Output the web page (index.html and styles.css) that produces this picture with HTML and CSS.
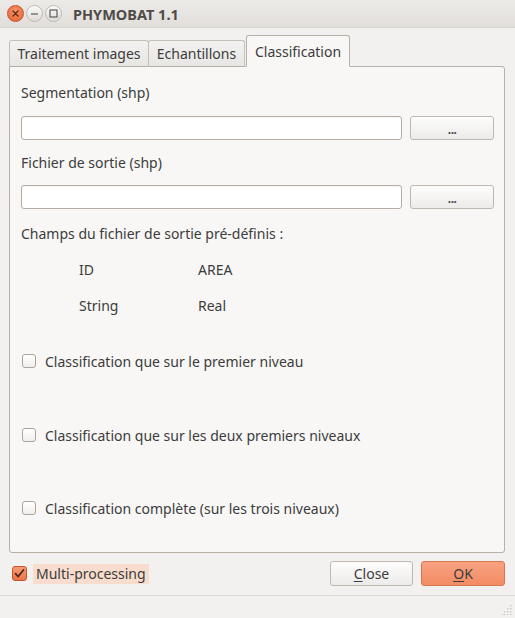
FILE: index.html
```html
<!DOCTYPE html>
<html lang="fr">
<head>
<meta charset="utf-8">
<title>PHYMOBAT 1.1</title>
<link rel="stylesheet" href="styles.css">
</head>
<body>
<div class="window">
  <div class="titlebar">
    <div class="wbtns">
      <span class="wbtn close"><svg width="17" height="17" viewBox="0 0 17 17"><path d="M6 6l5 5M11 6l-5 5" stroke="#5a2a18" stroke-width="1.3" stroke-linecap="round"/></svg></span>
      <span class="wbtn"><svg width="17" height="17" viewBox="0 0 17 17"><path d="M5 9h7" stroke="#5c5c5c" stroke-width="1.2"/></svg></span>
      <span class="wbtn"><svg width="17" height="17" viewBox="0 0 17 17"><rect x="5" y="5" width="7" height="7" fill="none" stroke="#5c5c5c" stroke-width="1.2"/></svg></span>
    </div>
    <div class="title">PHYMOBAT 1.1</div>
  </div>

  <div class="body">
    <div class="tabs">
      <div class="tab t1">Traitement images</div>
      <div class="tab t2">Echantillons</div>
      <div class="tab active">Classification</div>
    </div>
    <div class="panel">
      <div class="label l1">Segmentation (shp)</div>
      <div class="filerow r1">
        <div class="input"></div>
        <div class="btn dots">...</div>
      </div>
      <div class="label l2">Fichier de sortie (shp)</div>
      <div class="filerow r2">
        <div class="input"></div>
        <div class="btn dots">...</div>
      </div>
      <div class="label l3">Champs du fichier de sortie pré-définis :</div>
      <div class="fields">
        <span>ID</span><span>AREA</span>
        <span>String</span><span>Real</span>
      </div>
      <div class="check c1"><span class="box"></span><span>Classification que sur le premier niveau</span></div>
      <div class="check c2"><span class="box"></span><span>Classification que sur les deux premiers niveaux</span></div>
      <div class="check c3"><span class="box"></span><span>Classification complète (sur les trois niveaux)</span></div>
    </div>

    <div class="footer">
      <div class="multi">
        <span class="box checked"><svg width="15" height="15" viewBox="0 0 15 15"><path d="M3.5 7.7l2.6 2.8L11.5 4" fill="none" stroke="#4a2a1c" stroke-width="1.8" stroke-linecap="round" stroke-linejoin="round"/></svg></span>
        <span class="multilabel">Multi-processing</span>
      </div>
      <div class="actions">
        <div class="btn push"><u>C</u>lose</div>
        <div class="btn push ok"><u>O</u>K</div>
      </div>
    </div>
  </div>

  <div class="status">
    <svg class="grip" width="10" height="10" viewBox="0 0 10 10">
      <g fill="#cfcac4">
        <rect x="8" y="0" width="1.5" height="1.5"/>
        <rect x="5" y="3" width="1.5" height="1.5"/><rect x="8" y="3" width="1.5" height="1.5"/>
        <rect x="2" y="6" width="1.5" height="1.5"/><rect x="5" y="6" width="1.5" height="1.5"/><rect x="8" y="6" width="1.5" height="1.5"/>
        <rect x="0" y="9" width="1.5" height="1"/><rect x="2" y="9" width="1.5" height="1"/><rect x="5" y="9" width="1.5" height="1"/><rect x="8" y="9" width="1.5" height="1"/>
      </g>
    </svg>
  </div>
</div>
</body>
</html>
```
FILE: styles.css
```css
html, body {
  margin: 0;
  padding: 0;
}
body {
  width: 515px;
  height: 618px;
  overflow: hidden;
  background: #f2f1f0;
  font-family: "Noto Sans", "DejaVu Sans", sans-serif;
  font-size: 14px;
  color: #3c3c3c;
}
.window {
  display: flex;
  flex-direction: column;
  height: 618px;
}
.titlebar {
  height: 28px;
  flex: none;
  display: flex;
  align-items: center;
  background: linear-gradient(#eceae7, #e2dfdb);
  border-bottom: 1px solid #d8d4cf;
  box-sizing: border-box;
}
.wbtns {
  display: flex;
  gap: 2px;
  margin-left: 7px;
}
.wbtn {
  width: 17px;
  height: 17px;
  border-radius: 50%;
  box-sizing: border-box;
  border: 1px solid #bdb8b2;
  background: linear-gradient(#fbfbfa, #dedbd7);
  display: flex;
  align-items: center;
  justify-content: center;
}
.wbtn svg { display: block; margin: -1px; }
.wbtn.close {
  border-color: #c4532c;
  background: radial-gradient(circle at 50% 35%, #f7936a, #e8602f);
}
.title {
  margin-left: 11px;
  font-weight: bold;
  font-size: 14.5px;
  color: #4e4c49;
}
.body {
  flex: none;
  height: 568px;
  display: flex;
  flex-direction: column;
  box-sizing: border-box;
  padding: 7px 10px 0 9px;
  border-bottom: 1px solid #dcd8d3;
}
.tabs {
  display: flex;
  align-items: flex-end;
  height: 32px;
  position: relative;
  z-index: 1;
  margin-bottom: -1px;
}
.tab {
  box-sizing: border-box;
  height: 27px;
  display: flex;
  align-items: center;
  justify-content: center;
  border: 1px solid #c6bfb7;
  border-bottom-color: #b8afa6;
  border-radius: 3px 3px 0 0;
  background: linear-gradient(#f3f2f0, #e8e6e3);
  padding-bottom: 1px;
}
.t1 { width: 140px; }
.t2 { width: 97px; margin-left: -1px; }
.tab.active {
  width: 104px;
  height: 32px;
  margin-left: 1px;
  background: #f8f7f6;
  border-color: #b8afa6;
  border-bottom-color: #f8f7f6;
  padding-bottom: 0;
  padding-top: 1px;
}
.panel {
  box-sizing: border-box;
  height: 487px;
  border: 1px solid #b8afa6;
  border-radius: 0 3px 3px 3px;
  background: #f8f7f6;
  padding: 16px 10px 0 11px;
}
.label {
  line-height: 20px;
  height: 20px;
}
.l2 { margin-top: 13px; }
.l3 { margin-top: 15px; }
.filerow {
  display: flex;
  gap: 8px;
  height: 24px;
}
.r1 { margin-top: 13px; }
.r2 { margin-top: 12px; }
.input {
  width: 383px;
  box-sizing: border-box;
  border: 1px solid #b5ada5;
  border-radius: 3px;
  background: #ffffff;
  box-shadow: inset 0 1px 1px rgba(0,0,0,0.04);
}
.btn {
  box-sizing: border-box;
  border: 1px solid #bfb8b0;
  border-radius: 3px;
  background: linear-gradient(#fdfdfc, #edebe9);
  display: flex;
  align-items: center;
  justify-content: center;
}
.dots {
  width: 84px;
  font-size: 12px;
  font-weight: bold;
  letter-spacing: -0.5px;
  color: #4a4a4a;
  padding-top: 3px;
}
.fields {
  margin-top: 16px;
  padding-left: 58px;
  display: grid;
  grid-template-columns: 119px auto;
  row-gap: 16px;
  line-height: 20px;
}
.check {
  display: flex;
  align-items: center;
  gap: 9px;
  height: 20px;
  padding-left: 1px;
}
.c1 { margin-top: 35px; }
.c2 { margin-top: 54px; }
.c3 { margin-top: 53px; }
.box {
  flex: none;
  width: 14px;
  height: 14px;
  box-sizing: border-box;
  border: 1px solid #aba49d;
  border-radius: 3px;
  background: linear-gradient(#ffffff, #f1efed);
}
.footer {
  margin-top: 8px;
  height: 25px;
  display: flex;
  justify-content: space-between;
  align-items: center;
  margin-left: 3px;
}
.multi {
  display: flex;
  align-items: center;
  gap: 6px;
}
.box.checked {
  width: 15px;
  height: 15px;
  border-color: #c2552b;
  background: linear-gradient(#f79a72, #ec7447);
  display: flex;
  align-items: center;
  justify-content: center;
}
.box.checked svg { display: block; margin: -1px; }
.multilabel {
  background: #f8dccd;
  padding: 0 3px;
  line-height: 20px;
}
.actions {
  display: flex;
  gap: 8px;
}
.push {
  width: 84px;
  height: 25px;
  font-size: 14px;
}
.push:first-child { width: 83px; }
.push u {
  text-underline-offset: 2px;
}
.ok {
  border-color: #d8774f;
  background: linear-gradient(#f8a282, #f28c63);
}
.status {
  flex: 1;
  display: flex;
  justify-content: flex-end;
  align-items: flex-end;
  padding: 0 3px 3px 0;
}
.grip { display: block; }
```
